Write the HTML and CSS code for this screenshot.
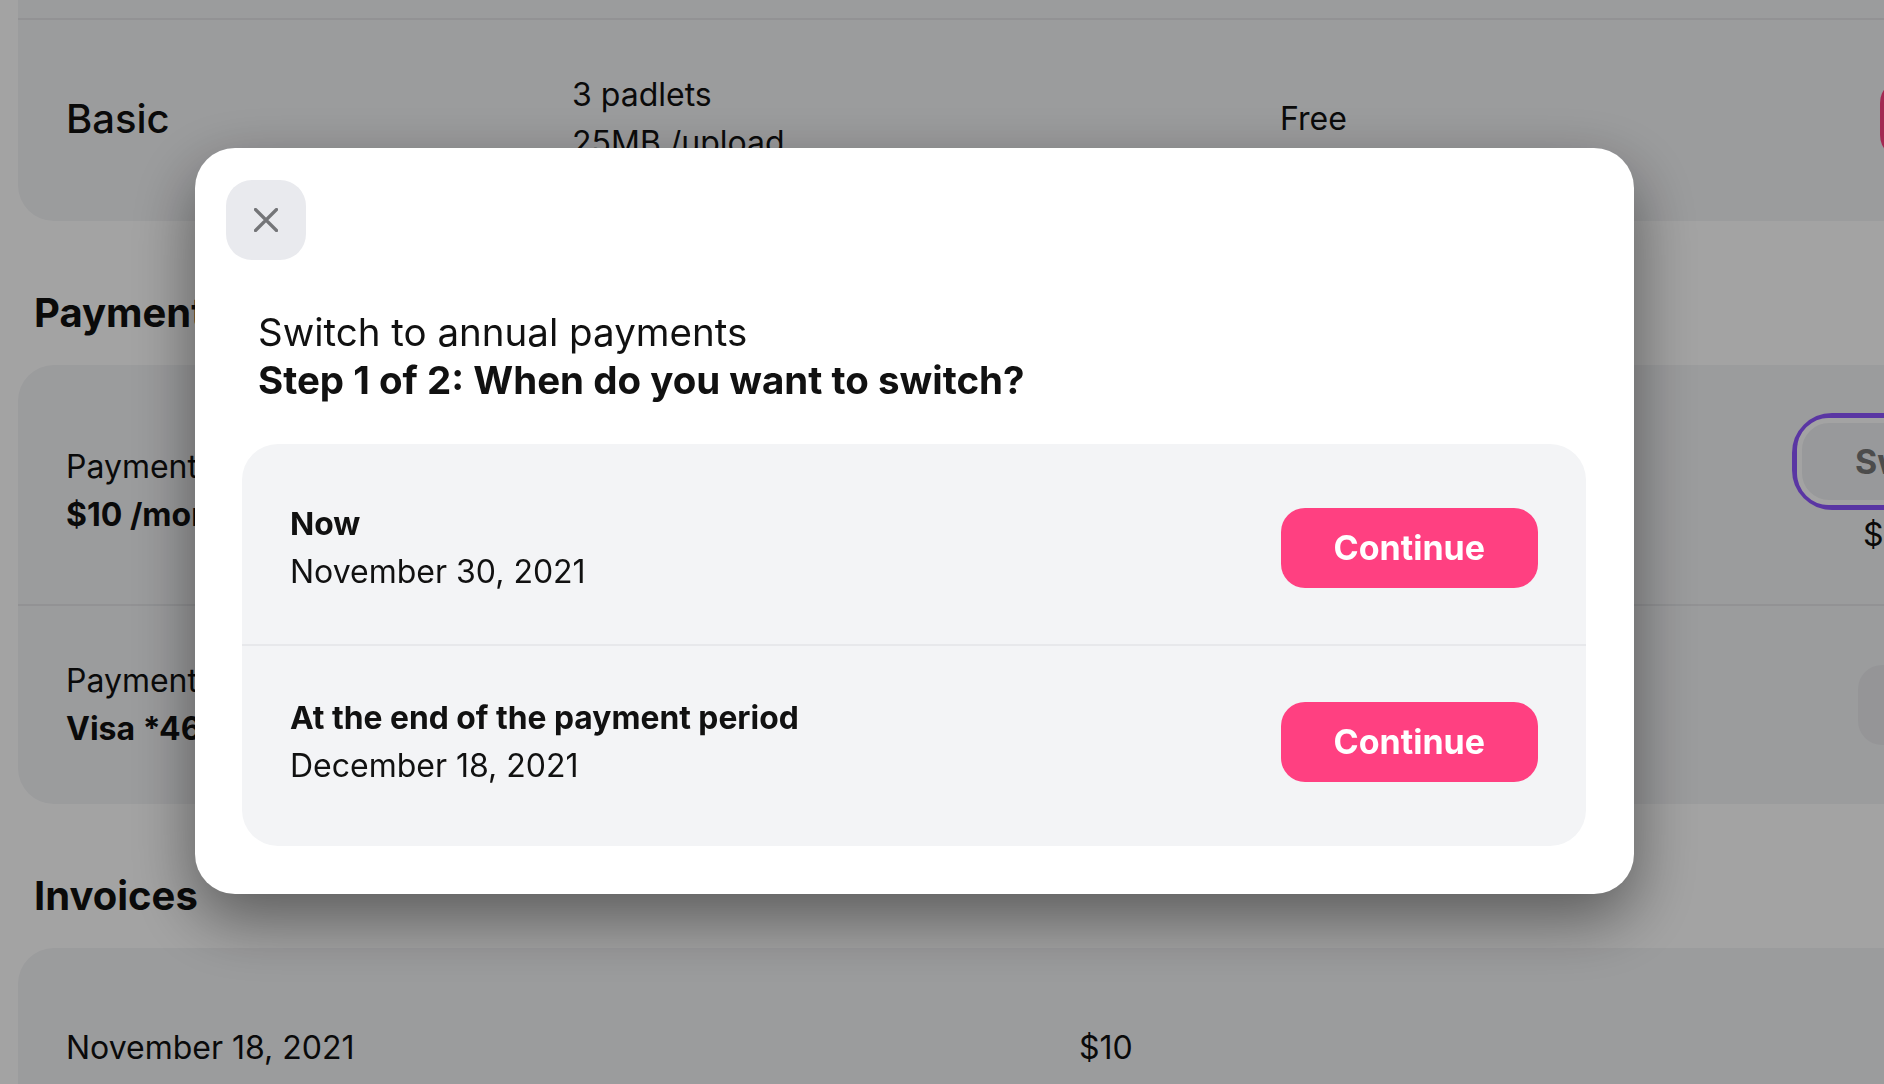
FILE: index.html
```html
<!DOCTYPE html>
<html lang="en">
<head>
<meta charset="utf-8">
<title>Billing</title>
<link rel="stylesheet" href="styles.css">
</head>
<body>
<div class="page">
  <section class="card card-plans">
    <div class="row plan-row">
      <div class="plan-name">Basic</div>
      <div class="plan-features"><div>3 padlets</div><div>25MB /upload</div></div>
      <div class="plan-price">Free</div>
      <div><button class="btn btn-pink">Current plan</button></div>
    </div>
  </section>

  <h2 class="section-title">Payment</h2>
  <section class="card">
    <div class="row pay-row">
      <div class="field field-first">
        <div class="field-label">Payment schedule</div>
        <div class="field-value">$10 /month</div>
      </div>
      <div class="switch-block">
        <div class="focus-ring"><button class="btn btn-soft">Switch to annual</button></div>
        <div class="switch-note">$96 /year</div>
      </div>
    </div>
    <div class="row pay-row">
      <div class="field">
        <div class="field-label">Payment method</div>
        <div class="field-value">Visa *4646</div>
      </div>
      <div class="method-action"><button class="btn btn-gray">Update</button></div>
    </div>
  </section>

  <h2 class="section-title">Invoices</h2>
  <section class="card">
    <div class="row invoice-row">
      <div>November 18, 2021</div>
      <div>$10</div>
    </div>
  </section>
</div>

<div class="overlay">
  <div class="modal" role="dialog" aria-labelledby="modal-title">
    <button class="close" aria-label="Close">
      <svg width="24" height="24" viewBox="0 0 24 24" aria-hidden="true">
        <path d="M1.5 1.5 L22.5 22.5 M22.5 1.5 L1.5 22.5" fill="none" stroke="#747578" stroke-width="3.2" stroke-linecap="round"/>
      </svg>
    </button>
    <h1 class="modal-title" id="modal-title">
      <span class="title-main">Switch to annual payments</span>
      <span class="title-step">Step 1 of 2: When do you want to switch?</span>
    </h1>
    <div class="options">
      <div class="option">
        <div class="option-text">
          <div class="option-name">Now</div>
          <div class="option-date">November 30, 2021</div>
        </div>
        <button class="btn btn-continue">Continue</button>
      </div>
      <div class="option">
        <div class="option-text">
          <div class="option-name">At the end of the payment period</div>
          <div class="option-date">December 18, 2021</div>
        </div>
        <button class="btn btn-continue">Continue</button>
      </div>
    </div>
  </div>
</div>
</body>
</html>
```
FILE: styles.css
```css
* {
  box-sizing: border-box;
}

html, body {
  margin: 0;
  height: 100%;
}

body {
  overflow: hidden;
  background: #ffffff;
  font-family: Inter, "Noto Sans", "Liberation Sans", sans-serif;
  color: #111111;
  font-size: 32px;
  line-height: 48px;
}

button {
  font-family: inherit;
}

/* ---------- page behind the dialog ---------- */
.page {
  width: 2300px;
  padding-left: 18px;
}

.card {
  background: #f3f4f6;
  border-radius: 36px;
}

.card-plans {
  margin-top: -180px;
  padding-top: 198px;
}

.row {
  display: grid;
  align-items: center;
  min-height: 200px;
  padding: 48px 48px;
}

.row + .row {
  border-top: 2px solid #e4e5e8;
}

.plan-row {
  grid-template-columns: 506px 708px 600px auto;
  min-height: 203px;
  padding: 47px 48px 51px;
  border-top: 2px solid #e4e5e8;
}

.plan-name {
  font-size: 40px;
  font-weight: 500;
}

.section-title {
  margin: 68px 0 28px 16px;
  font-size: 40px;
  line-height: 48px;
  font-weight: 700;
}

.pay-row {
  grid-template-columns: 1726px auto;
}

.field-first {
  padding-top: 12px;
}

.field-value {
  font-weight: 700;
}

.switch-block {
  display: flex;
  flex-direction: column;
  align-items: flex-start;
}

.focus-ring {
  border: 5px solid #8e55ff;
  border-radius: 40px;
}

.switch-note {
  margin-top: 4px;
  padding-left: 71px;
  line-height: 42px;
}

.method-action {
  padding-left: 66px;
}

.invoice-row {
  grid-template-columns: 1013px auto;
}

.btn {
  border: 0;
  height: 80px;
  border-radius: 24px;
  padding: 0 53px;
  font-size: 34px;
  font-weight: 700;
  line-height: 1;
  white-space: nowrap;
}

.btn-pink {
  background: #ff4081;
  color: #ffffff;
}

.btn-soft {
  height: 87px;
  border: 5px solid #ffffff;
  border-radius: 32px;
  background: #eef0f2;
  color: #777777;
}

.btn-gray {
  background: #e9eaed;
  color: #333333;
}

/* ---------- dialog ---------- */
.overlay {
  position: fixed;
  inset: 0;
  background: rgba(0, 0, 0, 0.36);
}

.modal {
  position: absolute;
  left: 195px;
  top: 148px;
  width: 1439px;
  padding: 32px 48px 48px 47px;
  background: #ffffff;
  border-radius: 40px;
  box-shadow: 0 24px 64px rgba(0, 0, 0, 0.45);
}

.close {
  display: flex;
  align-items: center;
  justify-content: center;
  width: 80px;
  height: 80px;
  margin-left: -16px;
  padding: 0;
  border: 0;
  border-radius: 26px;
  background: #e9eaee;
}

.modal-title {
  display: flex;
  flex-direction: column;
  margin: 48px 0 40px 16px;
  font-size: 38.5px;
  line-height: 48px;
  color: #111111;
}

.title-main {
  font-weight: 400;
}

.title-step {
  font-weight: 700;
}

.options {
  background: #f3f4f6;
  border-radius: 36px;
  padding: 8px 0;
}

.option {
  display: flex;
  align-items: center;
  justify-content: space-between;
  height: 192px;
  padding: 0 48px;
}

.option + .option {
  height: 194px;
  border-top: 2px solid #e7e8eb;
}

.option-name {
  font-weight: 700;
  font-size: 31.8px;
}

.btn-continue {
  background: #ff4081;
  color: #ffffff;
}
```
